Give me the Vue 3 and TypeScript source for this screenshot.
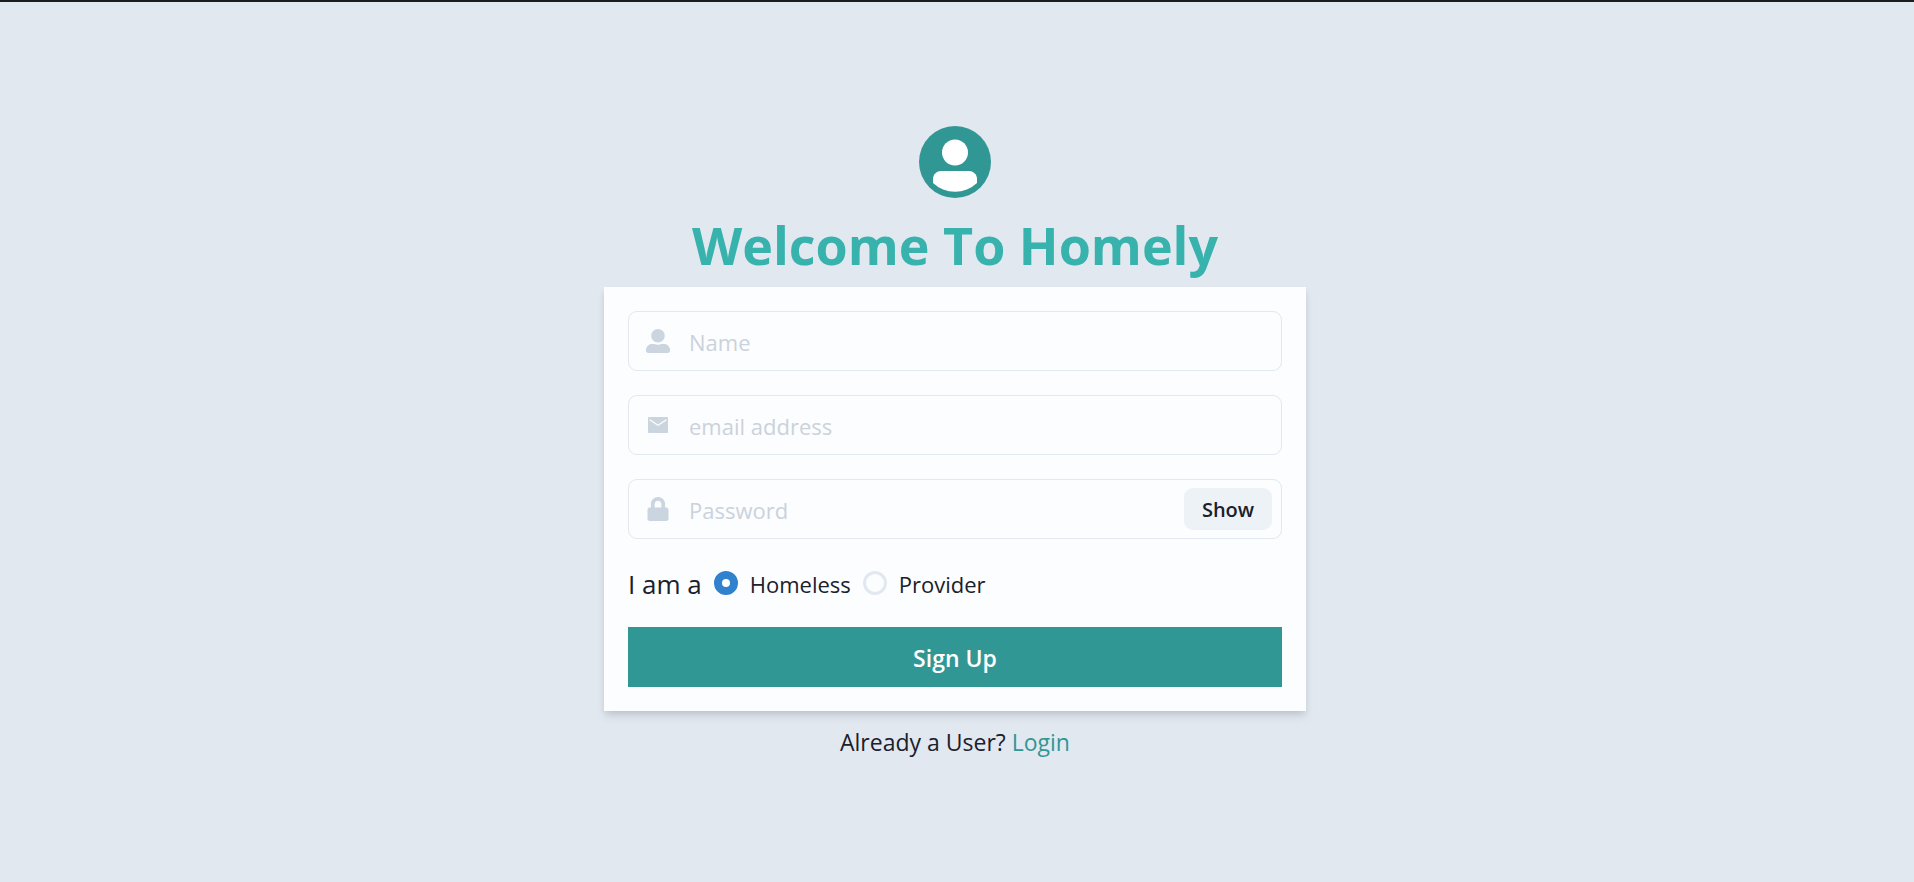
<script setup lang="ts">
import { ref } from 'vue'

type Role = 'homeless' | 'provider'

const name = ref('')
const email = ref('')
const password = ref('')
const showPassword = ref(false)
const role = ref<Role>('homeless')
const roles: { value: Role; label: string }[] = [
  { value: 'homeless', label: 'Homeless' },
  { value: 'provider', label: 'Provider' },
]
</script>

<template>
  <main class="page">
    <svg class="avatar" viewBox="0 0 72 72" aria-hidden="true">
      <circle cx="36" cy="36" r="36" fill="#319795" />
      <circle cx="36" cy="26.500" r="13" fill="#fff" />
      <path d="M14 53c0-5 4-8 8-8h28c4 0 8 3 8 8v4a32 32 0 0 1-44 0z" fill="#fff" />
    </svg>
    <h1 class="title">Welcome To Homely</h1>

    <form class="card" @submit.prevent>
      <div class="field">
        <svg class="icon" viewBox="0 0 512 512" aria-hidden="true">
          <path d="M256 288c79.500 0 144-64.500 144-144S335.500 0 256 0 112 64.500 112 144s64.500 144 144 144zm128 32h-55.100c-22.200 10.200-46.900 16-72.900 16s-50.600-5.800-72.900-16H128C57.300 320 0 377.300 0 448v16c0 26.500 21.500 48 48 48h416c26.500 0 48-21.500 48-48v-16c0-70.700-57.300-128-128-128z" />
        </svg>
        <input v-model="name" class="input" type="text" placeholder="Name" aria-label="Name" />
      </div>

      <div class="field">
        <svg class="icon" viewBox="0 0 24 24" aria-hidden="true">
          <path d="M21 4H3c-.6 0-1 .4-1 1v14c0 .6.4 1 1 1h18c.6 0 1-.4 1-1V5c0-.6-.4-1-1-1zm-.6 3.500L12 13 3.600 7.500V6L12 11.500 20.400 6z" />
        </svg>
        <input v-model="email" class="input" type="email" placeholder="email address" aria-label="Email address" />
      </div>

      <div class="field">
        <svg class="icon" viewBox="0 0 448 512" aria-hidden="true">
          <path d="M400 224h-24v-72C376 68.200 307.800 0 224 0S72 68.200 72 152v72H48c-26.500 0-48 21.500-48 48v192c0 26.500 21.500 48 48 48h352c26.500 0 48-21.500 48-48V272c0-26.500-21.500-48-48-48zm-104 0H152v-72c0-39.700 32.300-72 72-72s72 32.300 72 72v72z" />
        </svg>
        <input
          v-model="password"
          class="input"
          :type="showPassword ? 'text' : 'password'"
          placeholder="Password"
          aria-label="Password"
        />
        <button class="toggle" type="button" @click="showPassword = !showPassword">
          {{ showPassword ? 'Hide' : 'Show' }}
        </button>
      </div>

      <div class="roles" role="radiogroup" aria-labelledby="role-label">
        <span id="role-label" class="roles-label">I am a</span>
        <label v-for="item in roles" :key="item.value" class="role">
          <input v-model="role" class="radio" type="radio" name="role" :value="item.value" />
          <span class="role-text">{{ item.label }}</span>
        </label>
      </div>

      <button class="submit" type="submit">Sign Up</button>
    </form>

    <p class="footer">Already a User? <a class="link" href="#login">Login</a></p>
  </main>
</template>

<style>
body {
  margin: 0;
  background: #e2e8f0;
}
</style>

<style scoped>
.page {
  box-sizing: border-box;
  min-height: 100vh;
  display: flex;
  flex-direction: column;
  align-items: center;
  justify-content: center;
  gap: 12px;
  padding: 1px 4px 0 0;
  border-top: 2px solid #1c1c20;
  background: #e2e8f0;
  color: #1a202c;
  font-family: "Segoe UI", "Open Sans", "Noto Sans", sans-serif;
  font-size: 23px;
  line-height: 36px;
}

.avatar {
  width: 72px;
  height: 72px;
}

.title {
  box-sizing: border-box;
  height: 65px;
  margin: 0;
  padding-top: 2px;
  color: #38b2ac;
  font-size: 52px;
  font-weight: 700;
  line-height: 65px;
}

.card {
  box-sizing: border-box;
  width: 100%;
  max-width: 702px;
  display: flex;
  flex-direction: column;
  gap: 24px;
  padding: 24px;
  background: #fcfdff;
  box-shadow: 0 6px 9px -1px rgba(0, 0, 0, 0.1), 0 3px 6px -1px rgba(0, 0, 0, 0.08);
}

.field {
  box-sizing: border-box;
  height: 60px;
  display: flex;
  align-items: center;
  padding-right: 9px;
  border: 1px solid #e2e8f0;
  border-radius: 9px;
}

.field:focus-within {
  border-color: #3182ce;
}

.icon {
  flex: none;
  width: 24px;
  height: 24px;
  margin: 0 19px 0 17px;
  fill: #cbd5e0;
}

.input {
  box-sizing: border-box;
  flex: 1;
  min-width: 0;
  height: 100%;
  padding: 2px 0 0;
  border: 0;
  outline: 0;
  background: transparent;
  color: inherit;
  font: inherit;
  font-size: 22px;
}

.input::placeholder {
  color: #cbd2db;
  opacity: 1;
}

.toggle {
  width: 88px;
  height: 42px;
  padding: 2px 0 0;
  border: 0;
  border-radius: 9px;
  background: #edf2f7;
  color: inherit;
  font: inherit;
  font-size: 20px;
  font-weight: 600;
  cursor: pointer;
}

.roles {
  display: flex;
  align-items: center;
  gap: 12px;
  height: 40px;
}

.roles-label {
  padding-top: 2px;
  font-size: 26px;
}

.role {
  display: flex;
  align-items: center;
  gap: 12px;
  cursor: pointer;
}

.role-text {
  padding-top: 2px;
  font-size: 22px;
}

.radio {
  appearance: none;
  box-sizing: border-box;
  width: 24px;
  height: 24px;
  margin: 0;
  border: 3px solid #e2e8f0;
  border-radius: 50%;
}

.radio:checked {
  border: 8px solid #3182ce;
  background: #fff;
}

.submit {
  height: 60px;
  padding: 2px 24px 0;
  border: 0;
  background: #319795;
  color: #fff;
  font: inherit;
  font-weight: 600;
  cursor: pointer;
}

.footer {
  box-sizing: border-box;
  height: 36px;
  margin: 0;
  padding-top: 1px;
}

.link {
  color: #319795;
  text-decoration: none;
}
</style>
